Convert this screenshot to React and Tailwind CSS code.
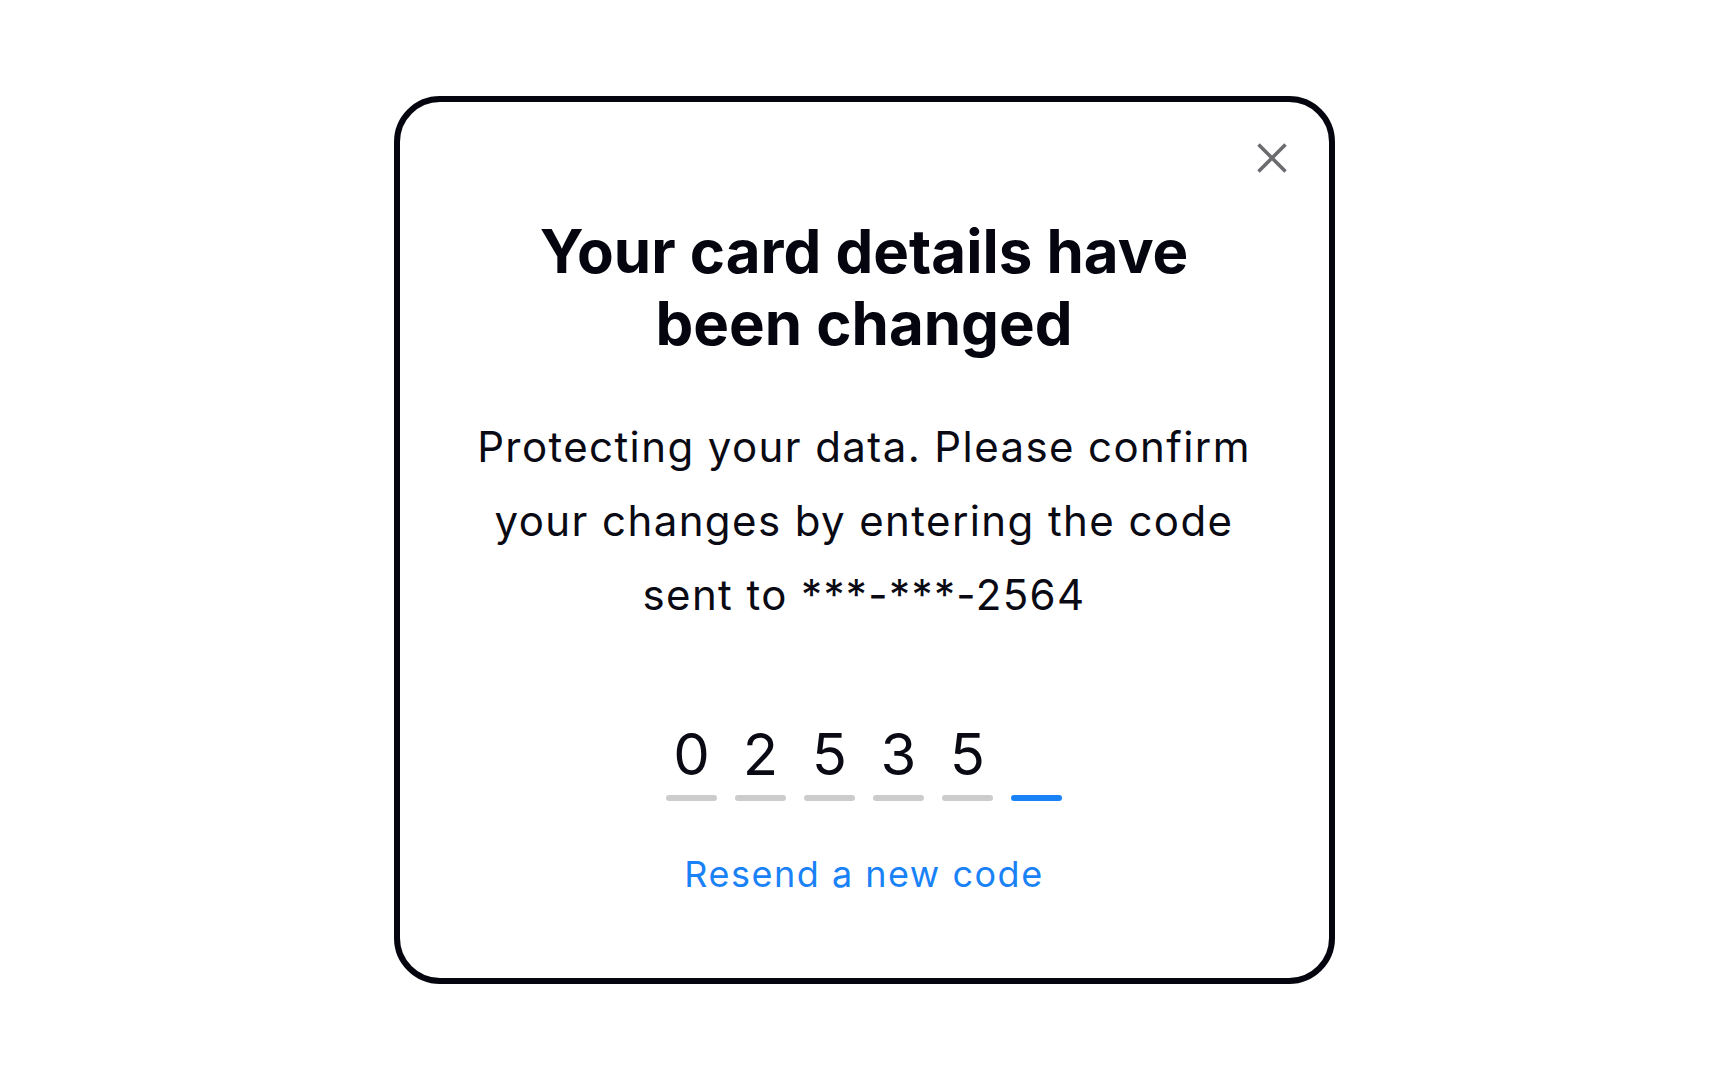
import React, { useState } from 'react';

const CloseIcon = () => (
	<svg width="30" height="30" viewBox="0 0 30 30" fill="none">
		<path d="M1.5 1.5L28.5 28.5M28.5 1.5L1.5 28.5" stroke="#6b6b70" strokeWidth="3.6" />
	</svg>
);

const App = () => {
	const [code] = useState(['0', '2', '5', '3', '5', '']);

	return (
		<div className="min-h-screen w-full bg-white flex items-center justify-center" style={{ fontFamily: 'Inter, "Noto Sans", sans-serif' }}>
			<div className="relative w-[941px] h-[888px] border-[6px] border-[#05050f] rounded-[46px] bg-white flex flex-col items-center pt-[113px]">
				<button className="absolute top-[41px] right-[42px] w-[30px] h-[30px] flex items-center justify-center">
					<CloseIcon />
				</button>

				<h1 className="text-[60px] leading-[72px] font-bold text-[#05050f] text-center">
					Your card details have
					<br />
					been changed
				</h1>

				<p className="mt-[51px] text-[42px] leading-[74px] tracking-[1.4px] text-[#0a0a14] text-center">
					Protecting your data. Please confirm
					<br />
					your changes by entering the code
					<br />
					sent to ***-***-2564
				</p>

				<div className="mt-[93px] flex gap-[18px]">
					{code.map((digit, i) => (
						<div key={i} className="flex flex-col items-center w-[51px]">
							<span className="h-[58px] text-[58px] leading-[58px] text-[#0a0a14]">{digit}</span>
							<div className={`mt-[12px] w-[51px] h-[6px] rounded-full ${i === code.length - 1 ? 'bg-[#1a82f7]' : 'bg-[#cccccc]'}`} />
						</div>
					))}
				</div>

				<a href="#" className="mt-[55px] text-[36px] leading-[36px] tracking-[1.5px] text-[#1a82f7]">
					Resend a new code
				</a>
			</div>
		</div>
	);
};

export default App;
